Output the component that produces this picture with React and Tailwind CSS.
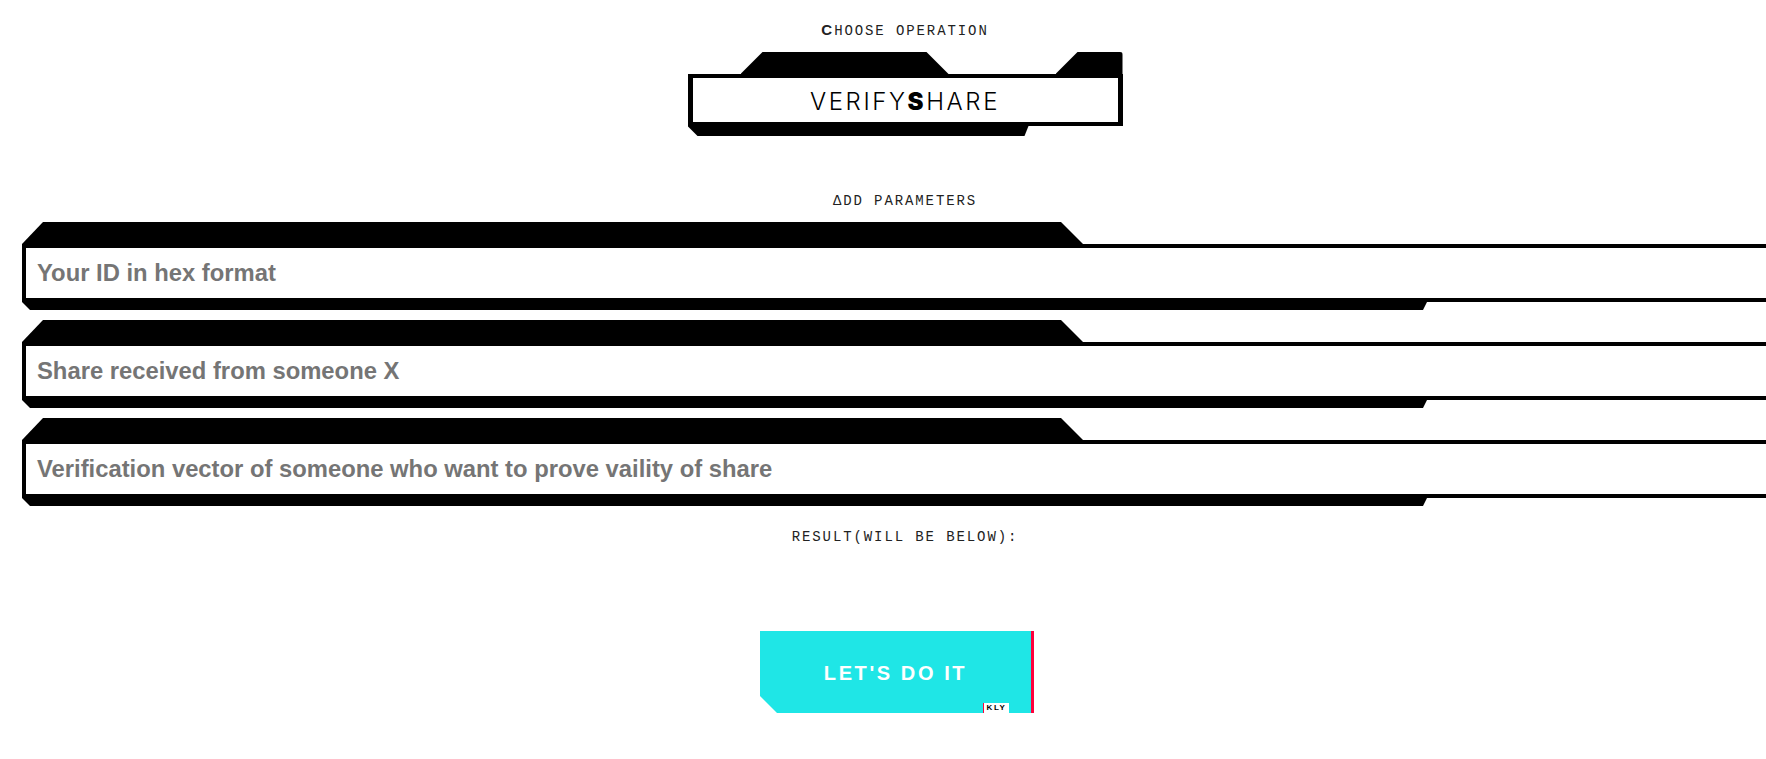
import React from "react";

function Heading({ first, rest, firstClass = "" }) {
  return (
    <div className="h-[20px] leading-[20px] text-[14px] tracking-[1.9px] text-[#222] [font-family:'Liberation_Mono',monospace] whitespace-pre">
      <span className={firstClass}>{first}</span>
      {rest}
    </div>
  );
}

function CyberInput({ placeholder }) {
  return (
    <div className="flex flex-col w-[1766px]">
      <div className="h-[22px] w-[1061px] bg-black [clip-path:polygon(0_100%,21px_0,1039px_0,100%_100%)]" />
      <div className="h-[58px] border-[4px] border-black bg-white flex items-center pl-[11px]">
        <span className="text-[23.8px] font-bold text-[#757575] [font-family:'Liberation_Sans',Arial,sans-serif]">
          {placeholder}
        </span>
      </div>
      <div className="h-[8px] w-[1405px] bg-black [clip-path:polygon(0_0,100%_0,calc(100%-4px)_100%,8px_100%)]" />
    </div>
  );
}

export default function App() {
  return (
    <div className="w-full h-[759px] overflow-hidden bg-white">
      <div className="w-[1810px] flex flex-col items-center pt-[20px]">
        <Heading
          first="C"
          rest="HOOSE OPERATION"
          firstClass="font-black [font-family:'Liberation_Sans',Arial,sans-serif] text-[15px] tracking-normal mr-[2px]"
        />

        {/* select */}
        <div className="mt-[12px] w-[435px] flex flex-col">
          <div className="flex h-[22px]">
            <div className="ml-[53px] w-[208px] bg-black [clip-path:polygon(0_100%,22px_0,186px_0,100%_100%)]" />
            <div className="ml-[107px] w-[67px] bg-black rounded-tr-[3px] [clip-path:polygon(0_100%,22px_0,100%_0,100%_100%)]" />
          </div>
          <div className="h-[52px] border-[5px] border-t-[4px] border-b-[4px] border-black bg-white flex items-center justify-center pt-[4px]">
            <span className="text-[24px] font-light tracking-[2.6px] text-black [font-family:Inter,'Noto_Sans',sans-serif]">
              VERIFY<span className="font-black">S</span>HARE
            </span>
          </div>
          <div className="h-[10px] w-[341px] bg-black [clip-path:polygon(0_0,100%_0,calc(100%-4px)_100%,10px_100%)]" />
        </div>

        <div className="mt-[55px]">
          <Heading first="Δ" rest="DD PARAMETERS" />
        </div>

        <div className="mt-[11px] flex flex-col gap-[10px]">
          <CyberInput placeholder="Your ID in hex format" />
          <CyberInput placeholder="Share received from someone X" />
          <CyberInput placeholder="Verification vector of someone who want to prove vaility of share" />
        </div>

        <div className="mt-[21px]">
          <Heading first="R" rest="ESULT(WILL BE BELOW):" />
        </div>

        <button className="mt-[84px] self-start ml-[760px] relative w-[274px] h-[82px] bg-[#1fe6e6] border-r-[3px] border-[#ff003c] flex items-center justify-center pt-[2px] [clip-path:polygon(0_0,100%_0,100%_100%,17px_100%,0_calc(100%-17px))]">
          <span className="text-[20px] font-bold tracking-[2.6px] text-white [font-family:'Liberation_Sans',Arial,sans-serif]">
            LET'S DO IT
          </span>
          <span className="absolute left-[223px] bottom-0 w-[26px] h-[10px] bg-white border-l border-[#ff003c] text-[8px] leading-[10px] font-bold tracking-[1.5px] text-black text-center [font-family:'Liberation_Sans',Arial,sans-serif]">
            KLY
          </span>
        </button>
      </div>
    </div>
  );
}
